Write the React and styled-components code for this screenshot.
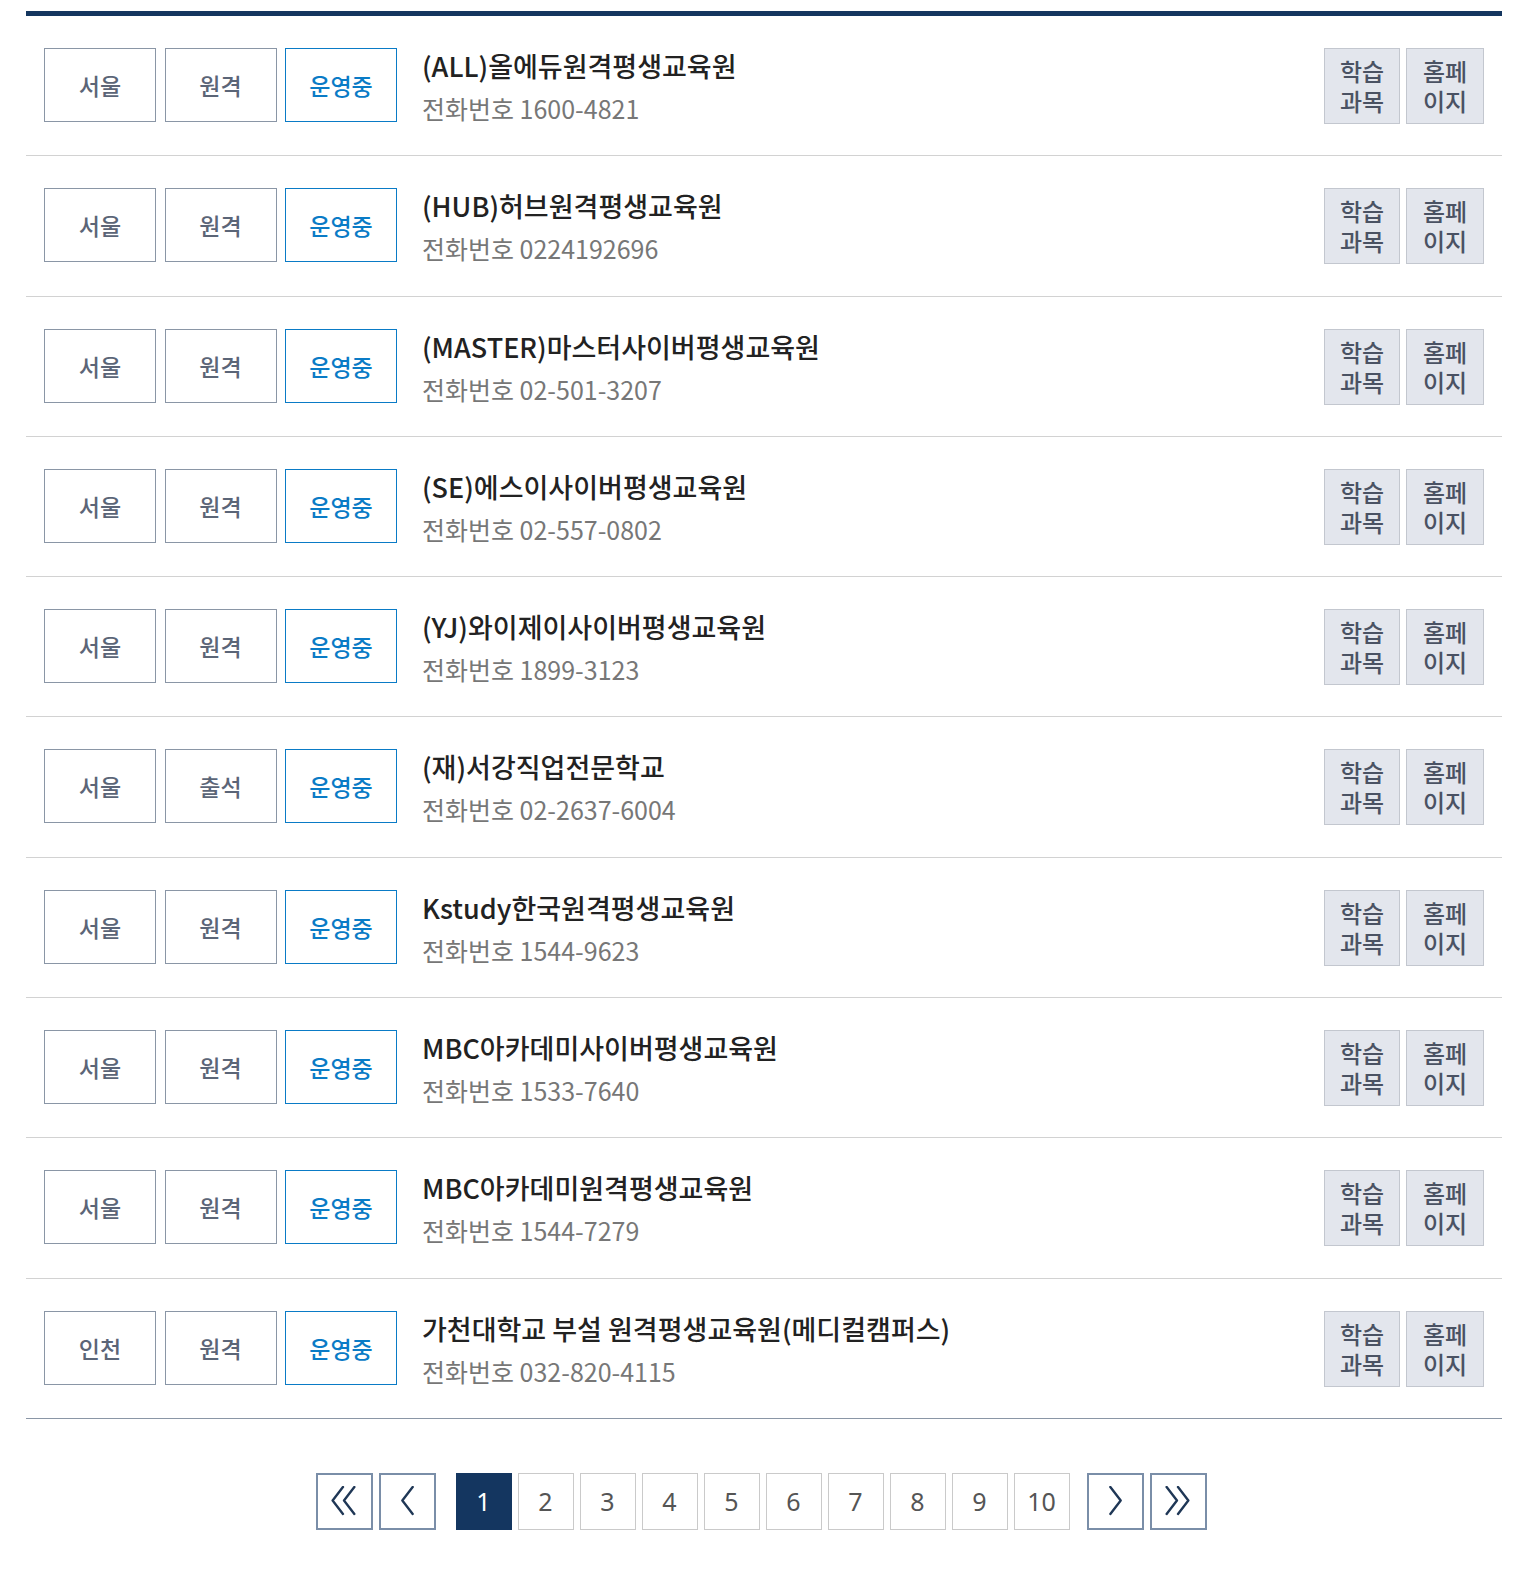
import React from "react";
import styled, { createGlobalStyle } from "styled-components";

const GlobalStyle = createGlobalStyle`
  html, body {
    margin: 0;
    padding: 0;
    background: #fff;
  }
  body {
    font-family: "Noto Sans CJK KR", "Noto Sans", sans-serif;
    color: #222;
  }
  * {
    box-sizing: border-box;
  }
`;

const institutes = [
  { region: "서울", type: "원격", name: "(ALL)올에듀원격평생교육원", phone: "1600-4821" },
  { region: "서울", type: "원격", name: "(HUB)허브원격평생교육원", phone: "0224192696" },
  { region: "서울", type: "원격", name: "(MASTER)마스터사이버평생교육원", phone: "02-501-3207" },
  { region: "서울", type: "원격", name: "(SE)에스이사이버평생교육원", phone: "02-557-0802" },
  { region: "서울", type: "원격", name: "(YJ)와이제이사이버평생교육원", phone: "1899-3123" },
  { region: "서울", type: "출석", name: "(재)서강직업전문학교", phone: "02-2637-6004" },
  { region: "서울", type: "원격", name: "Kstudy한국원격평생교육원", phone: "1544-9623" },
  { region: "서울", type: "원격", name: "MBC아카데미사이버평생교육원", phone: "1533-7640" },
  { region: "서울", type: "원격", name: "MBC아카데미원격평생교육원", phone: "1544-7279" },
  { region: "인천", type: "원격", name: "가천대학교 부설 원격평생교육원(메디컬캠퍼스)", phone: "032-820-4115" }
];

const Page = styled.div`
  padding: 11px 18px 44px 26px;
`;

const List = styled.ul`
  list-style: none;
  margin: 0;
  padding: 0;
  border-top: 5px solid #14365f;
  border-bottom: 1px solid #8a96a6;
`;

const Row = styled.li`
  display: flex;
  align-items: flex-start;
  padding: 32px 18px 30.3px 18px;
  border-bottom: 1px solid #d2d2d2;

  &:last-child {
    border-bottom: none;
  }
`;

const Tags = styled.div`
  display: flex;
  gap: 8.5px;
  flex-shrink: 0;
`;

const Tag = styled.span`
  display: flex;
  align-items: center;
  justify-content: center;
  width: 112px;
  height: 74px;
  border: 1px solid ${(p) => (p.$active ? "#0a7bc6" : "#8a96a6")};
  color: ${(p) => (p.$active ? "#0a7bc6" : "#5b6577")};
  font-size: 23px;
  font-weight: 500;
`;

const Info = styled.div`
  flex: 1;
  display: flex;
  flex-direction: column;
  margin-left: 25px;
  margin-top: -1px;
`;

const Title = styled.div`
  font-size: 27px;
  font-weight: 500;
  line-height: 38px;
  color: #222;
`;

const Phone = styled.div`
  margin-top: 6px;
  font-size: 25px;
  font-weight: 400;
  line-height: 34px;
  color: #777;
`;

const Actions = styled.div`
  display: flex;
  gap: 6px;
  flex-shrink: 0;
`;

const ActionButton = styled.a`
  display: flex;
  flex-direction: column;
  align-items: center;
  justify-content: center;
  width: ${(p) => p.$width}px;
  height: 76px;
  background: #e3e6ed;
  border: 1px solid #c3c7cf;
  color: #4a5263;
  font-size: 24px;
  font-weight: 500;
  line-height: 30px;
  text-align: center;
  text-decoration: none;
`;

const ActionLine = styled.span`
  display: block;
  height: 30px;
  line-height: 30px;
`;

const Pagination = styled.nav`
  display: flex;
  justify-content: center;
  align-items: center;
  gap: 6px;
  margin-top: 54px;
  padding-right: 6px;
`;

const PageButton = styled.a`
  display: flex;
  align-items: center;
  justify-content: center;
  width: ${(p) => (p.$arrow ? 57 : 56)}px;
  height: 57px;
  border: ${(p) => (p.$arrow ? "2px solid #7a8ea8" : "1px solid #cacaca")};
  background: ${(p) => (p.$current ? "#143660" : "#fff")};
  border-color: ${(p) => (p.$current ? "#143660" : undefined)};
  color: ${(p) => (p.$current ? "#fff" : "#555")};
  font-family: "Noto Sans", sans-serif;
  font-size: 25px;
  font-weight: 400;
  text-decoration: none;
  margin-left: ${(p) => p.$gapBefore || 0}px;
`;

const Chevron = ({ dir = "left", double = false }) => {
  const pts = dir === "left" ? "12,1 2,14 12,27" : "2,1 12,14 2,27";
  return (
    <svg width={double ? 30 : 16} height="30" viewBox={double ? "-1 0 28 29" : "-1 0 15 29"} fill="none">
      <polyline points={pts} stroke="#1f3756" strokeWidth="2.3" strokeLinejoin="round" strokeLinecap="round" />
      {double && (
        <polyline
          points={pts}
          transform="translate(11 0)"
          stroke="#1f3756"
          strokeWidth="2.3"
          strokeLinejoin="round"
          strokeLinecap="round"
        />
      )}
    </svg>
  );
};

export default function App() {
  const pages = [1, 2, 3, 4, 5, 6, 7, 8, 9, 10];
  return (
    <Page>
      <GlobalStyle />
      <List>
        {institutes.map((item, index) => (
          <Row key={index}>
            <Tags>
              <Tag>{item.region}</Tag>
              <Tag>{item.type}</Tag>
              <Tag $active>운영중</Tag>
            </Tags>
            <Info>
              <Title>{item.name}</Title>
              <Phone>전화번호 {item.phone}</Phone>
            </Info>
            <Actions>
              <ActionButton href="#" $width={76}>
                <ActionLine>학습</ActionLine>
                <ActionLine>과목</ActionLine>
              </ActionButton>
              <ActionButton href="#" $width={78}>
                <ActionLine>홈페</ActionLine>
                <ActionLine>이지</ActionLine>
              </ActionButton>
            </Actions>
          </Row>
        ))}
      </List>
      <Pagination>
        <PageButton href="#" $arrow aria-label="처음">
          <Chevron dir="left" double />
        </PageButton>
        <PageButton href="#" $arrow aria-label="이전">
          <Chevron dir="left" />
        </PageButton>
        {pages.map((n) => (
          <PageButton key={n} href="#" $current={n === 1} $gapBefore={n === 1 ? 14 : 0}>
            {n}
          </PageButton>
        ))}
        <PageButton href="#" $arrow aria-label="다음" $gapBefore={11}>
          <Chevron dir="right" />
        </PageButton>
        <PageButton href="#" $arrow aria-label="마지막">
          <Chevron dir="right" double />
        </PageButton>
      </Pagination>
    </Page>
  );
}
